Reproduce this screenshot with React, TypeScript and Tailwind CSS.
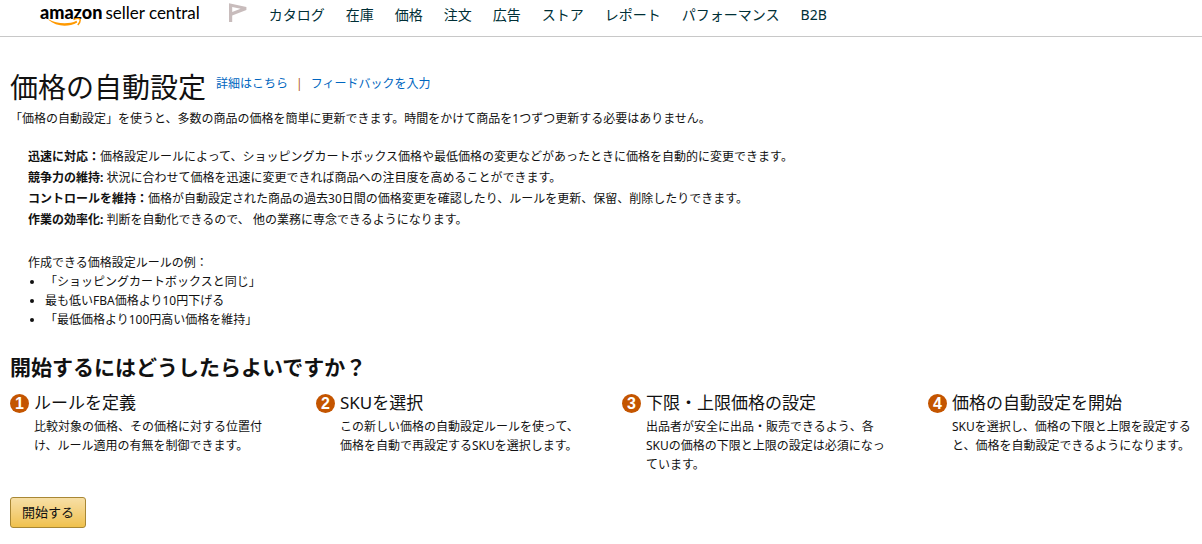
import React from 'react';

interface Step {
  title: string;
  text: string;
}

const navItems = ['カタログ', '在庫', '価格', '注文', '広告', 'ストア', 'レポート', 'パフォーマンス', 'B2B'];

const benefits = [
  { label: '迅速に対応：', text: '価格設定ルールによって、ショッピングカートボックス価格や最低価格の変更などがあったときに価格を自動的に変更できます。' },
  { label: '競争力の維持:', text: ' 状況に合わせて価格を迅速に変更できれば商品への注目度を高めることができます。' },
  { label: 'コントロールを維持：', text: '価格が自動設定された商品の過去30日間の価格変更を確認したり、ルールを更新、保留、削除したりできます。' },
  { label: '作業の効率化:', text: ' 判断を自動化できるので、 他の業務に専念できるようになります。' },
];

const examples = [
  '「ショッピングカートボックスと同じ」',
  '最も低いFBA価格より10円下げる',
  '「最低価格より100円高い価格を維持」',
];

const steps: Step[] = [
  { title: 'ルールを定義', text: '比較対象の価格、その価格に対する位置付け、ルール適用の有無を制御できます。' },
  { title: 'SKUを選択', text: 'この新しい価格の自動設定ルールを使って、価格を自動で再設定するSKUを選択します。' },
  { title: '下限・上限価格の設定', text: '出品者が安全に出品・販売できるよう、各SKUの価格の下限と上限の設定は必須になっています。' },
  { title: '価格の自動設定を開始', text: 'SKUを選択し、価格の下限と上限を設定すると、価格を自動設定できるようになります。' },
];

const Logo: React.FC = () => (
  <a href="#" className="relative flex items-baseline gap-[3px] font-[Lato,sans-serif] leading-6 text-black">
    <span className="text-[18px] font-black">amazon</span>
    <span className="text-[17px]">seller central</span>
    <svg className="absolute left-2 top-[17px]" width="34" height="10" viewBox="0 0 34 10" fill="none" aria-hidden="true">
      <path d="M0.5 2.2C8 6.6 20 8 28.5 3.8L29.2 5.4C20 10.6 8 9.6 0.3 2.8Z" fill="#ff9900" />
      <path d="M25.5 2.6C28 1.4 31 1.3 32 2C32.5 3.6 31.4 6.2 29.8 8" stroke="#ff9900" strokeWidth="1.5" />
    </svg>
  </a>
);

const Header: React.FC = () => (
  <header className="flex h-[37px] items-start border-b border-[#c8c8c8] pl-10">
    <Logo />
    <svg className="ml-[29px] mt-[3px]" width="18" height="20" viewBox="0 0 18 20" fill="none" aria-hidden="true">
      <path d="M0 0.3L17.4 4V7L3.2 12.4V19H0ZM3.2 4V9L11.6 5.8Z" fill="#c8bcbc" fillRule="evenodd" />
    </svg>
    <nav className="ml-[22px] flex gap-[21px] pt-1 text-[14px] leading-[21px] text-[#002f36]">
      {navItems.map((item) => (
        <a key={item} href="#" className="whitespace-nowrap">
          {item}
        </a>
      ))}
    </nav>
  </header>
);

const StepCard: React.FC<{ step: Step; number: number }> = ({ step, number }) => (
  <li className="flex items-start gap-[5px]">
    <span className="mt-[5px] flex h-[19px] w-[19px] shrink-0 items-center justify-center rounded-full bg-[#c45500] font-['Liberation_Sans',sans-serif] text-[16px] font-bold leading-none text-white">
      {number}
    </span>
    <div>
      <h3 className="text-[17px] leading-7">{step.title}</h3>
      <p className="leading-[19px]">{step.text}</p>
    </div>
  </li>
);

const App: React.FC = () => {
  return (
    <div className="bg-white font-['Noto_Sans','Noto_Sans_CJK_JP',sans-serif] text-[12px] leading-[19px] text-[#111]" lang="ja">
      <Header />
      <main className="pb-4 pl-[10px] pr-2 pt-8">
        <div className="flex items-start gap-[10px]">
          <h1 className="text-[28px] leading-9">価格の自動設定</h1>
          <div className="flex gap-2 pt-[5px] text-[#0066c0]">
            <a href="#">詳細はこちら</a>
            <span className="text-[#b05a20]">|</span>
            <a href="#">フィードバックを入力</a>
          </div>
        </div>
        <p className="mt-1">「価格の自動設定」を使うと、多数の商品の価格を簡単に更新できます。時間をかけて商品を1つずつ更新する必要はありません。</p>

        <div className="mt-[18px] pl-[18px] leading-[21px]">
          {benefits.map((benefit) => (
            <p key={benefit.label}>
              <b>{benefit.label}</b>
              {benefit.text}
            </p>
          ))}
        </div>

        <div className="mt-[23px] pl-[18px]">
          <p>作成できる価格設定ルールの例：</p>
          <ul className="list-disc pl-[17px]">
            {examples.map((example) => (
              <li key={example}>{example}</li>
            ))}
          </ul>
        </div>

        <h2 className="mt-6 text-[21px] font-bold leading-7">開始するにはどうしたらよいですか？</h2>
        <ol className="mt-2 grid grid-cols-4 gap-10">
          {steps.map((step, index) => (
            <StepCard key={step.title} step={step} number={index + 1} />
          ))}
        </ol>

        <button
          type="button"
          className="mt-[23px] h-[31px] rounded-[3px] border border-[#a88734] bg-linear-to-b from-[#f7dfa5] to-[#f0c14b] px-[11px] text-[13px]"
        >
          開始する
        </button>
      </main>
    </div>
  );
};

export default App;
